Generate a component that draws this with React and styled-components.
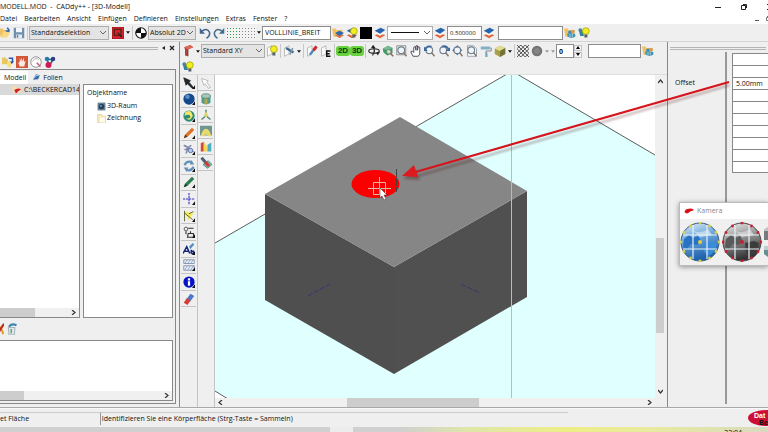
import { useState } from "react";
import styled, { createGlobalStyle } from "styled-components";

const GlobalStyle = createGlobalStyle`
*{
    box-sizing: border-box;
}
body{
    margin: 0;
    overflow: hidden;
    background: #efefef;
    color: #111;
    font-family: "Open Sans", "Noto Sans", sans-serif;
    font-size: 7px;
    line-height: 10px;
}
button, input, select{
    font: inherit;
    color: inherit;
    margin: 0;
    padding: 0;
    border: 0;
    border-radius: 0;
    outline: 0;
}
`

const layers = (
    <>
        <path d="M1 11l7-3 7 3-7 4z" fill="#e0653a" />
        <path d="M1 8l7-3 7 3-7 3.500z" fill="#f6f6f6" />
        <path d="M1 5l8-4 6 3-7 5z" fill="#2463ad" />
    </>
)
const bulb = (
    <>
        <circle cx="10.500" cy="5.500" r="4.500" fill="#f3ee22" stroke="#a2a000" />
        <path d="M8.500 10h4v4h-4z" fill="#55606a" />
    </>
)
const people = (
    <>
        <circle cx="8" cy="7" r="2.500" fill="#3c8bc0" />
        <circle cx="12" cy="6" r="2.500" fill="#d79a4e" />
        <path d="M4 9h11v4q-5 3-10 0z" fill="#3f93b5" />
        <path d="M8 9v5M11 9v5" stroke="#bfe0e6" />
    </>
)
const folder = <path d="M0 2h5l1 2h8v3l-4 6H2z" fill="#f1c063" />
const lens = (
    <>
        <circle cx="7" cy="7" r="4.500" fill="#eef4f8" stroke="#72808c" strokeWidth="1.500" />
        <path d="M10 10l4 5" stroke="#8a7a72" strokeWidth="2" />
    </>
)
const more = <path d="M16 11v5h-4z" fill="#111" />
const plane = <path d="M2 4l6-3v11l-6 3z" fill="#fafafa" stroke="#aaa" />

const icons = {
    open: <>{folder}<path d="M6 6h9l-4 8H2z" fill="#f8d981" /><path d="M11 1l3 4M9 5l5 1" stroke="#3468b0" strokeWidth="2" /></>,
    save: <><path d="M1 1h14v14H1z" fill="#6f8faf" /><path d="M4 1h8v6H4z" fill="#f4f7fa" /><path d="M4 10h8v5H4z" fill="#e5ebf0" /><path d="M5 11h2v3H5z" fill="#526f8c" /></>,
    pick: <><path d="M0 0h16v16H0z" fill="#d5232c" stroke="#8c1118" /><path d="M3 3h9v8H3z" fill="none" stroke="#421" strokeWidth="1.500" /><path d="M8 7l6 6-2 1-5-6z" fill="#222" /></>,
    origin: <><circle cx="8" cy="8" r="7" fill="#fff" stroke="#111" strokeWidth="1.500" /><path d="M8 1a7 7 0 0 0-7 7h7zM8 15a7 7 0 0 0 7-7H8z" fill="#111" /></>,
    undo: <><path d="M3 6q8-6 11 1 1 5-4 8" fill="none" stroke="#42658d" strokeWidth="2" /><path d="M1 1v8h7z" fill="#42658d" /></>,
    redo: <><path d="M13 6q-8-6-11 1-1 5 4 8" fill="none" stroke="#42708d" strokeWidth="2" /><path d="M15 1v8H8z" fill="#42708d" /></>,
    layerFolder: <>{folder}<path d="M4 11l6-3 6 3-6 4z" fill="#e0754a" /><path d="M4 8l6-3 6 3-6 4z" fill="#2c6cad" /></>,
    layerBulb: <>{layers}{bulb}</>,
    layers,
    black: <path d="M0 0h16v16H0z" fill="#000" />,
    folderPeople: <>{folder}{people}</>,
    peopleBulb: <><path d="M1 4h5l2 8H3z" fill="#32829b" /><circle cx="3" cy="4" r="2.500" fill="#4682a4" />{bulb}</>,
    beam: <><path d="M3 3l8-3 4 3-7 3v9l-4-1V6z" fill="#b5403b" /><path d="M3 3l8-3 4 3-7 3z" fill="#d96a5b" /><path d="M8 6v9" stroke="#633" /></>,
    planeBulb: <>{plane}{bulb}</>,
    planeTools: <>{plane}<path d="M4 4l10 6" stroke="#3f6c91" strokeWidth="3" /><path d="M13 4l-4 9" stroke="#7c93a5" strokeWidth="2" /></>,
    planePen: <>{plane}<path d="M5 13L14 2" stroke="#4b88bd" strokeWidth="3" /><path d="M10 7l4-5" stroke="#d52a2a" strokeWidth="4" /></>,
    planeE: <>{plane}<path d="M14 8h-5v7h5M9 11.500h4" fill="none" stroke="#111" strokeWidth="2" /></>,
    orbit: <><ellipse cx="8" cy="8" rx="7" ry="3" fill="none" stroke="#222" strokeWidth="1.500" /><path d="M6 1q5 6 0 13" fill="none" stroke="#222" strokeWidth="1.500" /><path d="M4 4l3-4 3 4zM11 10l5-1-3 5z" fill="#222" /></>,
    greenBox: <><path d="M1 5l7-4 6 3v7l-7 3-5-4z" fill="#3a9c5e" /><path d="M1 5l7-4 6 3-7 3z" fill="#79b995" /><path d="M9 9l6 6" stroke="#8a6655" strokeWidth="2" /><circle cx="9" cy="9" r="3" fill="#c8dfd0" stroke="#777" /></>,
    zoomRect: <><path d="M1 1h12v12H1z" fill="none" stroke="#777" />{lens}</>,
    hand: <path d="M4 15L1 9l2-1 2 2V3l2-1 1 5V1h2v6l1-5 2 1v9l-2 3z" fill="#fff" stroke="#445" strokeWidth="1.200" />,
    zoomUndo: <>{lens}<path d="M1 7q2-7 9-5" fill="none" stroke="#3868a3" strokeWidth="2" /><path d="M0 2v6h5z" fill="#3868a3" /></>,
    zoomRedo: <>{lens}<path d="M5 2q7-2 9 4" fill="none" stroke="#3868a3" strokeWidth="2" /><path d="M16 3v5h-6z" fill="#3868a3" /></>,
    zoomAll: <>{lens}<path d="M7 0l2 3H5zM0 7l3-2v4zM14 7l-3-2v4zM7 14l-2-3h4z" fill="#50759a" /></>,
    zoomPage: <><path d="M2 1h8l4 4v10H2z" fill="#fff" stroke="#789" />{lens}</>,
    roller: <><path d="M1 2h12v4H1z" fill="#7fb0c5" /><path d="M13 4h2v4H8v3" fill="none" stroke="#667" /><path d="M7 10h3v6H7z" fill="#72aac0" /></>,
    goldBox: <><path d="M1 5l7-4 7 3v8l-7 4-7-4z" fill="#a8a048" /><path d="M1 5l7-4 7 3-7 4z" fill="#e0dc93" /><path d="M8 8l7-4v8l-7 4z" fill="#767337" /></>,
    mesh: <path d="M0 0l16 16M5 0l11 11M11 0l5 5M0 5l11 11M0 11l5 5M16 0L0 16M11 0L0 11M5 0L0 5M16 5L5 16M16 11l-5 5" stroke="#222" />,
    ball: <><circle cx="8" cy="8" r="7" fill="#747474" /><circle cx="8" cy="8" r="4" fill="#858585" /></>,
    docs: <><path d="M0 2h5l1 2h2v7H0z" fill="#e8c95f" /><path d="M7 7h5v8H7z" fill="#f6df7d" /><path d="M9 3h5v5" fill="none" stroke="#245ab0" strokeWidth="2" /><path d="M11 7h5l-3 4z" fill="#245ab0" /></>,
    stop: <><path d="M0 0h16v16H0z" fill="#d2573b" /><path d="M5 14l-2-5 2-1V3l2 4V2l2 5 1-5 1 6 2-2-2 8z" fill="#fbe9df" /></>,
    clock: <><circle cx="8" cy="8" r="7" fill="#fff" stroke="#777" /><path d="M3 7q5-6 9-2" fill="none" stroke="#999" /><path d="M9 9l5 5" stroke="#d0556a" strokeWidth="2" /></>,
    molecule: <><path d="M4 4l8 1-5 8z" fill="none" stroke="#267" strokeWidth="2" /><circle cx="4" cy="4" r="3" fill="#257ba9" /><circle cx="12" cy="4" r="3" fill="#313d89" /><circle cx="6" cy="12" r="4" fill="#cf1856" /></>,
    blueFlag: <><path d="M2 12L7 2l7 2-3 7z" fill="#386ca3" /><path d="M3 9l5-5 5 1" fill="none" stroke="#9cc8e2" strokeWidth="2" /></>,
    part: <><path d="M0 2h7l2 3h6v9H2z" fill="#f8ddb0" /><path d="M4 9q7-5 12-1l-5 3-4 4z" fill="#d81f20" /></>,
    space: <><path d="M1 1h14v14H1z" fill="#6b8396" /><circle cx="8" cy="8" r="5" fill="#27415b" /><circle cx="7" cy="7" r="2" fill="#6993af" /></>,
    drawing: <><path d="M1 1h7l2 3h5v11H1z" fill="#f7e9b7" stroke="#d8c48a" /><path d="M5 6h9v9H5z" fill="#fffbed" /></>,
    cross: <><path d="M5 1q8 5 10 14" fill="none" stroke="#e0a030" strokeWidth="3" /><path d="M16 1L7 15" stroke="#c3281c" strokeWidth="3" /></>,
    bin: <><path d="M3 6h9l-1 10H4z" fill="#dce8ea" stroke="#8ba3aa" /><path d="M4 5q3-5 10-2" fill="none" stroke="#3a86ae" strokeWidth="3" /><path d="M7 8v6" stroke="#76a274" strokeWidth="2" /></>,
    arrow: <><path d="M1 1l9 4-2 2 6 7-2 1-6-6-2 2z" fill="#20242a" stroke="#20242a" />{more}</>,
    sphere: <><circle cx="8" cy="8" r="7.500" fill="#14478c" /><circle cx="6" cy="5" r="3" fill="#5a8fc5" />{more}</>,
    swirl: <><circle cx="8" cy="8" r="7.500" fill="#2a8d78" /><path d="M3 3q8-5 10 5-4 8-9 3 8 1 5-4-3-2-7 1z" fill="#f3e76a" />{more}</>,
    orange: <><path d="M1 15l2-5 9-9 3 3-9 9z" fill="#dd7322" /><path d="M1 15l2-5 3 3z" fill="#5b3a20" />{more}</>,
    chain: <><path d="M1 3l6 3 4-3M2 9l6-2 6 5M7 6l-3 8" fill="none" stroke="#7b86aa" strokeWidth="2" /><circle cx="10" cy="10" r="3" fill="#bcc6ea" stroke="#445d9b" />{more}</>,
    cycle: <><path d="M2 7q3-7 10-4M14 9q-3 7-10 4" fill="none" stroke="#6391b9" strokeWidth="3" /><path d="M11 0l4 6H9zM5 16L1 10h6z" fill="#6391b9" />{more}</>,
    green: <><path d="M1 15l2-5 9-9 3 3-9 9z" fill="#287c4d" /><path d="M1 15l2-5 3 3z" fill="#263b2b" />{more}</>,
    axes: <><path d="M8 0v16M0 8h16" stroke="#3333c8" strokeWidth="1.500" strokeDasharray="3 1" />{more}</>,
    angle: <><path d="M2 2l12 2-7 10z" fill="#f4e95c" /><path d="M2 1v14M2 4l11 9M8 5l6-3" stroke="#555d38" strokeWidth="1.200" />{more}</>,
    measure: <><circle cx="4" cy="4" r="2.500" fill="none" stroke="#333" /><path d="M7 3h7M4 7v4M7 10h7v5H6zM10 10V7" fill="none" stroke="#333" strokeWidth="1.500" />{more}</>,
    label: <><path d="M0 14L5 5l4 9M2 11h6M11 9v5M11 11h3v3h-3" fill="none" stroke="#15237b" strokeWidth="2" /><path d="M8 5l5-5 2 2-5 6z" fill="#4c8fbd" />{more}</>,
    hatch: <><path d="M1 1h14v5H1zM1 9h14v6H1z" fill="#eaf0f8" stroke="#6b82a5" /><path d="M2 6l4-5M6 6l4-5M10 6l4-5M2 15l4-6M6 15l4-6M10 15l4-6" stroke="#7e93b2" />{more}</>,
    info: <><circle cx="8" cy="8" r="7.500" fill="#0612c4" /><path d="M8 3v3M8 7v6" stroke="#fff" strokeWidth="3" />{more}</>,
    eraser: <><path d="M4 9l6-8 5 3-6 8z" fill="#4b79c5" /><path d="M1 13l4-6 5 3-4 6z" fill="#dc3b35" /></>,
    ghost: <path d="M2 2l9 3-2 2 5 7-3 1-4-6-2 2z" fill="#fff" stroke="#aaa" />,
    drum: <><path d="M2 4v9q6 4 12 0V4z" fill="#519c8b" /><path d="M6 5h4v10H6z" fill="#b5a650" /><ellipse cx="8" cy="4" rx="6" ry="3" fill="#a7c9b6" stroke="#4e8474" /></>,
    tripod: <><path d="M8 1v8l-6 5M8 9l6 5" fill="none" stroke="#598579" strokeWidth="2" /><path d="M5 9l3-6 3 6-3 2z" fill="#d9d86b" /></>,
    arch: <><path d="M0 1h16v13H0z" fill="#6d9690" /><path d="M1 15q2-10 7-10t7 10h-4q-3-5-6 0z" fill="#e8d96e" /></>,
    bars: <><path d="M1 3l4-2v13H1z" fill="#d2493b" /><path d="M5 1l5 7v6H5z" fill="#f0d75a" /><path d="M10 5l5-3v12h-5z" fill="#4caec4" /></>,
    probe: <><path d="M4 10l7-5 5 5-6 5z" fill="#7cb9ad" stroke="#47756e" /><path d="M2 1l8 9" stroke="#4b6073" strokeWidth="4" /><path d="M7 7l5 5" stroke="#d53d31" strokeWidth="4" /></>,
    logo: <path d="M0 9q1-6 8-6 8-1 8 3-5 0-7 3-5 5-9 0z" fill="#d80e18" />,
}

const Icon = ({ name }) => <Glyph viewBox="0 0 16 16" aria-hidden="true">{icons[name]}</Glyph>

const Tool = ({ name, label }) => (
    <ToolButton aria-label={label || name}><Icon name={name} /></ToolButton>
)

const More = ({ $dim }) => (
    <MoreButton aria-label="Mehr" $dim={$dim}>
        <svg width="6" height="4" viewBox="0 0 6 4"><path d="M0 0h6L3 4z" fill="currentColor" /></svg>
    </MoreButton>
)

const Combo = ({ label, width, value, white, line }) => (
    <ComboBox $w={width} $white={white}>
        <select aria-label={label} defaultValue={value}>
            <option value={value}>{value}</option>
        </select>
        {line && <LineSample />}
        <svg width="6" height="4" viewBox="0 0 6 4"><path d="M0 0l3 3 3-3" fill="none" stroke="#666" /></svg>
    </ComboBox>
)

const Chevron = ({ d }) => (
    <svg width="5" height="5" viewBox="0 0 5 5"><path d={d} fill="none" stroke="#333" strokeWidth="1.200" /></svg>
)
const right = "M1 0l3 2.500-3 2.500"
const left = "M4 0L1 2.500l3 2.500"
const up = "M0 4l2.500-3 2.500 3"
const down = "M0 1l2.500 3 2.500-3"

const menu = ["Datei", "Bearbeiten", "Ansicht", "Einfügen", "Definieren", "Einstellungen", "Extras", "Fenster", "?"]
const mainTools = ["arrow", "sphere", "swirl", "orange", "chain", "cycle", "green", "axes", "angle", "measure", "label", "hatch", "info", "eraser"]
const sideTools = ["ghost", "drum", "tripod", "arch", "bars", "probe"]
const views = ["orbit", "greenBox", "zoomRect", "hand", "zoomUndo", "zoomRedo", "zoomAll", "zoomPage", "roller", "goldBox"]
const properties = ["", "", "5.00mm", "", "", "", "", "", "", ""]

const Globe = ({ dark }) => {
    const dot = dark ? "#c81e32" : "#d8cf4a"
    const id = dark ? "globeDark" : "globeBlue"
    const spots = [[20, 1], [29.5, 4], [36, 10.500], [39, 20], [36, 29.500], [29.500, 36], [20, 39], [10.500, 36], [4, 29.500], [1, 20], [4, 10.500], [10.500, 4]]
    return (
        <svg viewBox="0 0 40 40" width="40" height="40" aria-hidden="true">
            <defs>
                <linearGradient id={id} x1="0" y1="0" x2="0.3" y2="1">
                    <stop offset="0" stopColor={dark ? "#eee" : "#e4f0f8"} />
                    <stop offset="0.450" stopColor={dark ? "#999" : "#6fa8dc"} />
                    <stop offset="1" stopColor={dark ? "#333" : "#1d62ad"} />
                </linearGradient>
            </defs>
            <circle cx="20" cy="20" r="19" fill={`url(#${id})`} stroke={dark ? "#444" : "#35577b"} />
            <path d="M4 17l5-4 4 3 5-2 3 5-4 4-6-1-4 5-4-2z" fill={dark ? "#5a5a5a" : "#2872c4"} />
            <path d="M23 21l9-2 5 2-2 8-6 5-5-4z" fill={dark ? "#3c3c3c" : "#3b8cd8"} />
            <path d="M12 8q8 5 16-1l4 6-12 2z" fill={dark ? "#ccc" : "#bdd9ec"} />
            <path d="M13 3v34M27 3v34M3 13h34M3 27h34" stroke="#e8f1f8" strokeWidth="1.200" />
            {spots.map(([x, y], i) => <circle key={i} cx={x} cy={y} r="1.400" fill={dot} />)}
            <circle cx="20" cy="20" r="2" fill={dot} />
        </svg>
    )
}

const Scene = () => (
    <SceneSvg viewBox="0 0 440 323" preserveAspectRatio="xMidYMid slice" role="img" aria-label="3D-Ansicht">
        <path d="M0 168L292-1h10L440 80v243H13L0 316z" fill="#e0ffff" />
        <path d="M0 168L292-1M302-1L440 80M0 316l13 8" fill="none" stroke="#333" strokeWidth="0.800" />
        <path d="M50 119l129 73v107L50 225z" fill="#4f4f4f" />
        <path d="M312 116l-133 76v107l133-77z" fill="#505050" />
        <path d="M185 42l127 74-133 76-129-73z" fill="#868686" />
        <path d="M93 221l22-12M246 209l19 9" stroke="#34347c" strokeDasharray="5 2" />
        <ellipse cx="160.500" cy="109" rx="24" ry="14" fill="#fb0000" />
        <path d="M181.500 94v23" stroke="#444" strokeDasharray="8 1" />
        <path d="M296.500 0v323" stroke="#b9bcbc" />
        <path d="M158.500 107.500h12v12h-12zM153 113.500h23M164.500 102v17" fill="none" stroke="#e3b9a0" />
        <path d="M165 113v10l2-2 2 4 2-1-2-4h3z" fill="#fff" stroke="#333" strokeWidth="0.500" />
    </SceneSvg>
)

const App = () => {
    const [tab, setTab] = useState("Modell")
    const [count, setCount] = useState(0)

    return (
        <Wrapper>
            <GlobalStyle />
            <TitleBar>
                <h1>MODELL.MOD &nbsp;- &nbsp;CADdy++ - [3D-Modell]</h1>
                <WindowButtons>
                    <button aria-label="Minimieren"><svg width="6" height="6"><path d="M0 3.500h6" stroke="#222" /></svg></button>
                    <button aria-label="Wiederherstellen"><svg width="6" height="6"><path d="M.5 1.500h4v4h-4zM2 .5h3.500V4" fill="none" stroke="#222" /></svg></button>
                    <button aria-label="Schließen"><svg width="6" height="6"><path d="M0 0l6 6M6 0L0 6" stroke="#222" /></svg></button>
                </WindowButtons>
            </TitleBar>
            <MenuBar>
                {menu.map((item) => <button key={item}>{item}</button>)}
                <ChildButtons>
                    <button aria-label="Fenster minimieren"><svg width="4" height="5"><path d="M0 4.500h4" stroke="#555" /></svg></button>
                    <button aria-label="Fenster wiederherstellen"><svg width="5" height="5"><path d="M.5 1.500h3v3h-3zM1 .5h4" fill="none" stroke="#777" /></svg></button>
                </ChildButtons>
            </MenuBar>

            <TopToolbar>
                <Tool name="open" label="Öffnen" />
                <Tool name="save" label="Speichern" />
                <Separator />
                <Combo label="Selektion" width={80} value="Standardselektion" />
                <Spacer />
                <Tool name="pick" label="Auswahl" />
                <More />
                <Separator />
                <Tool name="origin" label="Ursprung" />
                <Combo label="Koordinaten" width={48} value="Absolut 2D" />
                <Spacer />
                <Tool name="undo" label="Rückgängig" />
                <Tool name="redo" label="Wiederholen" />
                <DotGrid aria-label="Raster" $color="#2f9445" />
                <DotGrid aria-label="Fangraster" $color="#888" />
                <More />
                <Field aria-label="Linienart" defaultValue="VOLLLINIE_BREIT" $w={69} />
                <Tool name="layerFolder" />
                <Tool name="layerBulb" />
                <Tool name="black" label="Farbe" />
                <Tool name="layers" />
                <Combo label="Strich" width={46} value="" white line />
                <Tool name="layers" />
                <Field aria-label="Strichbreite" defaultValue="0.500000" $w={35} $small />
                <Tool name="layers" />
                <Spacer />
                <Field aria-label="Folie" $w={65} />
                <Tool name="folderPeople" />
                <Tool name="peopleBulb" />
            </TopToolbar>

            <Body>
                <LeftDock>
                    <DockGrip>
                        <GripLine />
                        <svg width="14" height="6" viewBox="0 0 14 6"><path d="M3 1v4L0 3z" fill="#222" /><path d="M8 1l4 4M12 1L8 5" stroke="#222" strokeWidth="1.300" /></svg>
                    </DockGrip>
                    <DockTools>
                        {["docs", "stop", "clock", "molecule"].map((n) => <Tool key={n} name={n} />)}
                    </DockTools>
                    <DockPanel>
                        <Tabs role="tablist">
                            <Tab role="tab" aria-selected={tab === "Modell"} $active={tab === "Modell"} onClick={() => setTab("Modell")}>Modell</Tab>
                            <Tab role="tab" aria-selected={tab === "Folien"} $active={tab === "Folien"} onClick={() => setTab("Folien")}>
                                <Icon name="blueFlag" />Folien
                            </Tab>
                        </Tabs>
                        <Panes>
                            <TreePane>
                                <TreeRow><Icon name="part" /><span>C:\BECKERCAD14</span></TreeRow>
                                <HScroll $start={0} $size={44}><i /><Chevron d={right} /></HScroll>
                            </TreePane>
                            <ObjectPane>
                                <h2>Objektname</h2>
                                <ul>
                                    <li><Icon name="space" />3D-Raum</li>
                                    <li><Icon name="drawing" />Zeichnung</li>
                                </ul>
                            </ObjectPane>
                        </Panes>
                        <PanelTools>
                            <Tool name="cross" label="Löschen" />
                            <Tool name="bin" label="Papierkorb" />
                        </PanelTools>
                        <LogPane>
                            <HScroll $start={0} $size={14}><i /><Chevron d={right} /></HScroll>
                        </LogPane>
                    </DockPanel>
                </LeftDock>

                <Center>
                    <ViewToolbar>
                        <Tool name="beam" />
                        <More />
                        <Combo label="Ebene" width={64} value="Standard XY" />
                        <Tool name="planeBulb" />
                        <Separator />
                        <Tool name="planeTools" />
                        <More />
                        <Separator />
                        <Tool name="planePen" />
                        <Tool name="planeE" />
                        <Separator />
                        <ModeButton>2D</ModeButton>
                        <ModeButton>3D</ModeButton>
                        <Separator />
                        {views.map((n) => <Tool key={n} name={n} />)}
                        <More />
                        <Separator />
                        <Tool name="mesh" />
                        <Tool name="ball" />
                        <More $dim />
                        <More $dim />
                        <Field aria-label="Anzahl" value={count} onChange={(e) => setCount(e.target.value)} $w={18} $bold />
                        <Spinner>
                            <button aria-label="Mehr" onClick={() => setCount(Number(count) + 1)}><svg width="4" height="3"><path d="M0 3l2-3 2 3z" /></svg></button>
                            <button aria-label="Weniger" onClick={() => setCount(Number(count) - 1)}><svg width="4" height="3"><path d="M0 0l2 3 2-3z" /></svg></button>
                        </Spinner>
                        <Spacer $w={6} />
                        <Field aria-label="Gruppe" $w={53} />
                        <Tool name="folderPeople" />
                    </ViewToolbar>
                    <LampRow><Tool name="peopleBulb" /></LampRow>
                    <Workspace>
                        <Palette $count={14}>
                            {mainTools.map((n) => <Tool key={n} name={n} />)}
                        </Palette>
                        <Palette $count={6}>
                            {sideTools.map((n) => <Tool key={n} name={n} />)}
                        </Palette>
                        <Viewport>
                            <Scene />
                            <VScroll><Chevron d={up} /><i /><Chevron d={down} /></VScroll>
                            <HScroll $start={30} $size={30}><Chevron d={left} /><i /><Chevron d={right} /></HScroll>
                        </Viewport>
                    </Workspace>
                </Center>

                <RightDock>
                    <GripLine />
                    <PropertySheet>
                        <PropertyNames>
                            {properties.map((p, i) => (
                                <label key={i} htmlFor={`prop${i}`}>{i === 2 ? "Offset" : ""}</label>
                            ))}
                        </PropertyNames>
                        <PropertyValues>
                            {properties.map((p, i) => <input key={i} id={`prop${i}`} defaultValue={p} />)}
                        </PropertyValues>
                    </PropertySheet>
                </RightDock>

                <CameraWindow>
                    <header><Icon name="logo" /><span>Kamera</span></header>
                    <div>
                        <button aria-label="Kamera blau"><Globe /></button>
                        <button aria-label="Kamera grau"><Globe dark /></button>
                        <button aria-label="Ansichten">
                            <svg width="14" height="40" viewBox="0 0 14 40"><path d="M0 8l6-4h8v14H0z" fill="#777b7e" /><path d="M0 8l6-4h8v5H0z" fill="#c0c5c8" /><path d="M0 24h14v11H4l-4-3z" fill="#659093" /><path d="M0 24h14v4H0z" fill="#b9cfd0" /></svg>
                        </button>
                    </div>
                </CameraWindow>

                <Pointer viewBox="0 0 330 110" aria-hidden="true">
                    <defs>
                        <filter id="soft" x="-10%" y="-10%" width="120%" height="130%"><feGaussianBlur stdDeviation="1.200" /></filter>
                    </defs>
                    <g transform="translate(1 3)" opacity="0.300" filter="url(#soft)">
                        <path d="M329 4L10 97" stroke="#400" strokeWidth="2.200" />
                        <path d="M2 98l13-9 4 10z" fill="#400" />
                    </g>
                    <path d="M329 4L12 95" stroke="#d5141c" strokeWidth="2.200" />
                    <path d="M2 98l12-11 4 12z" fill="#dd1a1f" />
                </Pointer>
            </Body>

            <StatusBar>
                <Status>et Fläche</Status>
                <Status $boxed>Identifizieren Sie eine Körperfläche (Strg-Taste = Sammeln)</Status>
                <Brand viewBox="0 0 20 16" role="img" aria-label="Data Becker">
                    <ellipse cx="19" cy="8" rx="19" ry="8" fill="#cd0f35" />
                    <text x="6" y="8" fontSize="7" fontWeight="800" fill="#fff">Dat</text>
                    <text x="11" y="15" fontSize="7" fontWeight="800" fill="#111">Be</text>
                </Brand>
            </StatusBar>
            <Taskbar><time>22:04</time></Taskbar>
        </Wrapper>
    )
}

const Wrapper = styled.div`
display: flex;
flex-direction: column;
height: 100vh;
overflow: hidden;
`
const Glyph = styled.svg`
display: block;
flex: none;
width: 12px;
height: 12px;
`
const TitleBar = styled.header`
display: flex;
justify-content: space-between;
height: 13px;
background: #fff;
h1{
    margin: 0;
    font-size: 7px;
    font-weight: 400;
    line-height: 13px;
    white-space: nowrap;
}
`
const WindowButtons = styled.div`
display: flex;
gap: 20px;
margin-right: -5px;
button{
    width: 6px;
    background: none;
}
svg{
    display: block;
}
`
const MenuBar = styled.nav`
display: flex;
align-items: center;
gap: 7px;
height: 11px;
background: #fff;
button{
    background: none;
    white-space: nowrap;
}
`
const ChildButtons = styled.div`
display: flex;
gap: 7px;
margin-left: auto;
margin-right: -3px;
`
const Toolbar = styled.div`
display: flex;
align-items: center;
flex: none;
height: 18px;
`
const TopToolbar = styled(Toolbar)`
margin-left: -2px;
border-bottom: 1px solid #d4d4d4;
`
const ViewToolbar = styled(Toolbar)`
padding-left: 1px;
`
const ToolButton = styled.button`
display: flex;
align-items: center;
justify-content: center;
flex: none;
width: 14px;
height: 14px;
background: none;
`
const MoreButton = styled.button`
display: flex;
align-items: center;
justify-content: center;
flex: none;
width: 6px;
height: 14px;
background: none;
color: ${(p) => (p.$dim ? "#999" : "#111")};
svg{
    width: 4px;
    height: 3px;
}
`
const Separator = styled.span`
flex: none;
width: 1px;
height: 14px;
margin: 0 1px;
background: #c8c8c8;
`
const Spacer = styled.span`
flex: none;
width: ${(p) => p.$w || 2}px;
`
const ComboBox = styled.span`
position: relative;
display: flex;
align-items: center;
flex: none;
width: ${(p) => p.$w}px;
height: 14px;
border: 1px solid #adadad;
background: ${(p) => (p.$white ? "#fff" : "#e4e4e4")};
select{
    appearance: none;
    width: 100%;
    height: 12px;
    padding-left: 1px;
    background: none;
}
svg{
    position: absolute;
    right: 2px;
    pointer-events: none;
}
`
const LineSample = styled.span`
position: absolute;
left: 3px;
width: 28px;
height: 1px;
background: #111;
`
const Field = styled.input`
flex: none;
width: ${(p) => p.$w}px;
height: 14px;
padding-left: 2px;
border: 1px solid #8c8c8c;
background: #fff;
font-size: ${(p) => (p.$small ? 6 : 7)}px;
font-weight: ${(p) => (p.$bold ? 700 : 400)};
`
const DotGrid = styled.button`
flex: none;
width: 15px;
height: 12px;
background: radial-gradient(circle, ${(p) => p.$color} 1px, #f4f4f4 1px) 0 0 / 3px 3px;
`
const ModeButton = styled.button`
flex: none;
width: 14px;
height: 10px;
border-radius: 3px;
background: #67d13f;
color: #0d3a08;
font-family: "Liberation Sans", sans-serif;
font-size: 8px;
font-weight: 700;
line-height: 10px;
`
const Spinner = styled.div`
display: grid;
gap: 1px;
width: 8px;
height: 13px;
button{
    display: flex;
    align-items: center;
    justify-content: center;
    border: 1px solid #c4c4c4;
    background: #f4f4f4;
}
`
const Body = styled.main`
position: relative;
display: flex;
flex: 1;
min-height: 0;
border-bottom: 1px solid #a8a8a8;
`
const LeftDock = styled.aside`
display: flex;
flex-direction: column;
flex: none;
width: 180px;
padding-right: 3px;
padding-bottom: 3px;
border-right: 1px solid #888;
`
const DockGrip = styled.div`
display: flex;
align-items: center;
gap: 4px;
height: 12px;
`
const GripLine = styled.div`
flex: 1;
height: 3px;
border: 1px solid #b5b5b5;
border-width: 1px 0;
`
const DockTools = styled.div`
display: flex;
align-items: center;
height: 15px;
padding-left: 1px;
`
const DockPanel = styled.div`
display: flex;
flex-direction: column;
flex: 1;
min-height: 0;
padding: 1px 2px 2px 0;
border: 1px solid #888;
border-left: 0;
`
const Tabs = styled.div`
display: flex;
height: 13px;
`
const Tab = styled.button`
display: flex;
align-items: center;
gap: 2px;
padding: 0 2px 0 4px;
background: ${(p) => (p.$active ? "#fff" : "transparent")};
svg{
    width: 9px;
    height: 9px;
}
`
const Panes = styled.div`
display: flex;
flex: 1;
gap: 3px;
min-height: 0;
`
const TreePane = styled.div`
display: flex;
flex-direction: column;
justify-content: space-between;
flex: none;
width: 80px;
border-right: 1px solid #888;
border-bottom: 1px solid #888;
background: #fff;
`
const TreeRow = styled.div`
display: flex;
align-items: center;
gap: 3px;
height: 11px;
padding-left: 12px;
overflow: hidden;
background: #d9d9d9;
white-space: nowrap;
svg{
    width: 9px;
    height: 9px;
}
`
const ObjectPane = styled.div`
flex: 1;
padding: 3px;
border: 1px solid #888;
background: #fff;
h2{
    margin: 0;
    font-size: 7px;
    font-weight: 400;
}
ul{
    margin: 2px 0 0;
    padding: 0 0 0 10px;
    list-style: none;
}
li{
    display: flex;
    align-items: center;
    gap: 1px;
    height: 12px;
}
li svg{
    width: 9px;
    height: 9px;
}
`
const PanelTools = styled.div`
display: flex;
align-items: center;
flex: none;
height: 22px;
margin-left: -9px;
`
const LogPane = styled.div`
display: flex;
flex-direction: column;
justify-content: flex-end;
flex: none;
height: 61px;
border: 1px solid #888;
border-left: 0;
background: #fff;
`
const HScroll = styled.div`
position: relative;
display: flex;
align-items: center;
justify-content: space-between;
height: 9px;
padding: 0 3px;
background: #f0f0f0;
i{
    position: absolute;
    left: ${(p) => p.$start}%;
    width: ${(p) => p.$size}%;
    height: 100%;
    background: #cdcdcd;
}
svg:last-child{
    margin-left: auto;
}
`
const VScroll = styled.div`
display: flex;
flex-direction: column;
align-items: center;
justify-content: space-between;
padding: 4px 1px;
background: #f0f0f0;
i{
    width: 100%;
    height: 30%;
    margin-top: 98px;
    background: #cdcdcd;
}
`
const Center = styled.section`
display: flex;
flex-direction: column;
flex: 1;
min-width: 0;
`
const LampRow = styled.div`
flex: none;
height: 15px;
padding-left: 1px;
border-bottom: 1px solid #ddd;
`
const Workspace = styled.div`
display: flex;
flex: 1;
min-height: 0;
padding-left: 1px;
`
const Palette = styled.div`
display: flex;
flex-direction: column;
width: 17px;
border-right: 1px solid #c4c4c4;
${ToolButton}{
    width: 15px;
    height: ${(p) => (p.$count > 6 ? 23 : 16)}px;
    flex: ${(p) => (p.$count > 6 ? "0 1 5%" : "none")};
    border-bottom: 1px solid #c4c4c4;
}
`
const Viewport = styled.div`
display: grid;
grid-template-columns: minmax(0, 1fr) 10px;
grid-template-rows: minmax(0, 1fr) 9px;
flex: 1;
min-width: 0;
padding-right: 2px;
`
const SceneSvg = styled.svg`
width: 100%;
height: 100%;
background: #fff;
`
const RightDock = styled.aside`
display: flex;
flex-direction: column;
flex: none;
width: 101px;
padding: 5px 0 3px 2px;
border-left: 1px solid #888;
${GripLine}{
    flex: none;
    margin-right: 2px;
}
`
const PropertySheet = styled.div`
display: grid;
grid-template-columns: 57px 1fr;
flex: 1;
margin-top: 2px;
`
const PropertyNames = styled.div`
padding: 1px 0 0 5px;
border-right: 2px solid #999;
label{
    display: block;
    height: 12px;
    line-height: 12px;
}
`
const PropertyValues = styled.div`
padding: 1px 0 0 5px;
input{
    display: block;
    width: 100%;
    height: 12px;
    padding-left: 3px;
    border: 1px solid #888;
    border-width: 1px 0 0 1px;
    background: #fff;
}
input:last-child{
    border-bottom-width: 1px;
}
`
const CameraWindow = styled.section`
position: absolute;
top: 160px;
right: 0;
width: 89px;
overflow: hidden;
border: 1px solid #bbb;
border-right: 0;
background: #f0f0f0;
box-shadow: 0 1px 5px rgba(0, 0, 0, .4);
header{
    display: flex;
    align-items: center;
    gap: 3px;
    height: 16px;
    padding-left: 4px;
    background: #fff;
    color: #888;
}
header svg{
    width: 10px;
    height: 9px;
}
div{
    display: flex;
    gap: 2px;
    padding: 3px 0;
}
button{
    flex: none;
    height: 40px;
    background: none;
}
div svg{
    display: block;
}
`
const Pointer = styled.svg`
position: absolute;
top: 36px;
right: 38px;
width: 330px;
height: 110px;
pointer-events: none;
`
const StatusBar = styled.footer`
display: flex;
align-items: center;
flex: none;
height: 19px;
border-top: 1px solid #f8f8f8;
`
const Status = styled.span`
width: ${(p) => (p.$boxed ? "61%" : "13%")};
height: 13px;
padding-left: ${(p) => (p.$boxed ? 1 : 0)}px;
border-top: 1px solid #ccc;
border-left: ${(p) => (p.$boxed ? "1px solid #999" : 0)};
line-height: 12px;
white-space: nowrap;
`
const Brand = styled.svg`
width: 20px;
height: 16px;
margin-left: auto;
font-family: "Liberation Sans", sans-serif;
`
const Taskbar = styled.div`
flex: none;
height: 5px;
overflow: hidden;
padding: 1px 26px 0 0;
background: linear-gradient(90deg, #d0d0d0 43%, #ececec 43%, #ececec 46%, #d0d0d0 46%, #d0d0d0 52%, #dfe6a8 61%, #eeee86 74%, #e8eaa0 85%, #d8dac0 100%);
text-align: right;
time{
    display: block;
}
`
export default App
